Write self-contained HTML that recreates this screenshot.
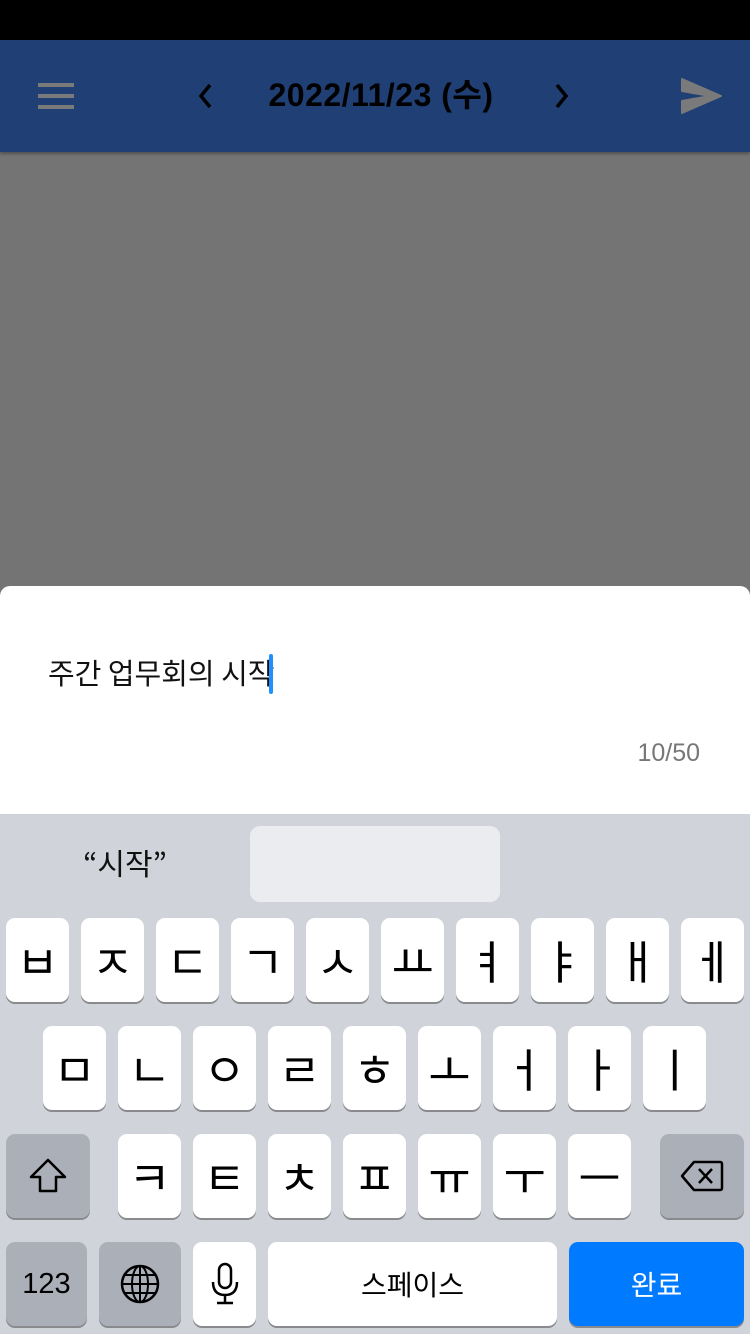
<!DOCTYPE html>
<html><head><meta charset="utf-8"><style>
*{margin:0;padding:0;box-sizing:border-box}
body{width:750px;height:1334px;position:relative;overflow:hidden;background:#747474;font-family:"Liberation Sans","Noto Sans CJK KR",sans-serif}
.a{position:absolute}
.k{position:absolute;width:63px;height:84px;background:#fff;border-radius:9px;box-shadow:0 2px 0 #898a8d;display:flex;align-items:center;justify-content:center;font-size:46px;color:#000;font-family:"Noto Sans CJK KR",sans-serif}
.g{background:#abafb8}
</style></head><body>
<div class="a" style="left:0;top:0;width:750px;height:40px;background:#000"></div>
<div class="a" style="left:0;top:40px;width:750px;height:112px;background:#203f75;box-shadow:0 2px 3px rgba(0,0,0,.3)"></div>
<div class="a" style="left:38px;top:83px;width:36px;height:4px;background:#7a7a7a"></div>
<div class="a" style="left:38px;top:94px;width:36px;height:4px;background:#7a7a7a"></div>
<div class="a" style="left:38px;top:105px;width:36px;height:4px;background:#7a7a7a"></div>
<svg class="a" style="left:190px;top:80px" width="30" height="34"><path d="M20 5 L11 16 L20 27" stroke="#000" stroke-width="3.5" fill="none"/></svg>
<svg class="a" style="left:548px;top:80px" width="30" height="34"><path d="M9 5 L18 16 L9 27" stroke="#000" stroke-width="3.5" fill="none"/></svg>
<div class="a" style="left:220px;top:73px;width:322px;text-align:center;font-size:32px;font-weight:bold;color:#000;line-height:44px;letter-spacing:0.5px">2022/11/23 (수)</div>
<svg class="a" style="left:680px;top:76px" width="44" height="40"><path d="M2 3 L41 20 L2 37 L2 25 L30 20 L2 15 Z" fill="#7a7a7a" stroke="#7a7a7a" stroke-width="2" stroke-linejoin="round"/></svg>

<div class="a" style="left:0;top:586px;width:750px;height:240px;background:#fff;border-radius:10px"></div>
<div class="a" style="left:48px;top:650px;font-size:29px;color:#111;line-height:44px;font-family:'Noto Sans CJK KR',sans-serif">주간 업무회의 시작</div>
<div class="a" style="left:269px;top:654px;width:4px;height:40px;background:#1e90ff;border-radius:2px"></div>
<div class="a" style="left:600px;top:736px;width:100px;text-align:right;font-size:25px;color:#777;line-height:34px">10/50</div>

<div class="a" style="left:0;top:814px;width:750px;height:520px;background:#d0d3d9"></div>
<div class="a" style="left:60px;top:840px;width:130px;text-align:center;font-size:30px;color:#111;line-height:44px;font-family:'Noto Sans CJK KR',sans-serif">“시작”</div>
<div class="a" style="left:250px;top:826px;width:250px;height:76px;background:#ebecef;border-radius:10px"></div>

<div class="k" style="left:6px;top:918px">ㅂ</div>
<div class="k" style="left:81px;top:918px">ㅈ</div>
<div class="k" style="left:156px;top:918px">ㄷ</div>
<div class="k" style="left:231px;top:918px">ㄱ</div>
<div class="k" style="left:306px;top:918px">ㅅ</div>
<div class="k" style="left:381px;top:918px">ㅛ</div>
<div class="k" style="left:456px;top:918px">ㅕ</div>
<div class="k" style="left:531px;top:918px">ㅑ</div>
<div class="k" style="left:606px;top:918px">ㅐ</div>
<div class="k" style="left:681px;top:918px">ㅔ</div>

<div class="k" style="left:43px;top:1026px">ㅁ</div>
<div class="k" style="left:118px;top:1026px">ㄴ</div>
<div class="k" style="left:193px;top:1026px">ㅇ</div>
<div class="k" style="left:268px;top:1026px">ㄹ</div>
<div class="k" style="left:343px;top:1026px">ㅎ</div>
<div class="k" style="left:418px;top:1026px">ㅗ</div>
<div class="k" style="left:493px;top:1026px">ㅓ</div>
<div class="k" style="left:568px;top:1026px">ㅏ</div>
<div class="k" style="left:643px;top:1026px">ㅣ</div>

<div class="k g" style="left:6px;top:1134px;width:84px"><svg width="40" height="38"><path d="M20 3 L37 20 L28 20 L28 34 L12 34 L12 20 L3 20 Z" fill="none" stroke="#000" stroke-width="2.5" stroke-linejoin="round"/></svg></div>
<div class="k" style="left:118px;top:1134px">ㅋ</div>
<div class="k" style="left:193px;top:1134px">ㅌ</div>
<div class="k" style="left:268px;top:1134px">ㅊ</div>
<div class="k" style="left:343px;top:1134px">ㅍ</div>
<div class="k" style="left:418px;top:1134px">ㅠ</div>
<div class="k" style="left:493px;top:1134px">ㅜ</div>
<div class="k" style="left:568px;top:1134px">ㅡ</div>
<div class="k g" style="left:660px;top:1134px;width:84px"><svg width="44" height="34"><path d="M14 3 L40 3 Q42 3 42 5 L42 29 Q42 31 40 31 L14 31 L2 17 Z" fill="none" stroke="#000" stroke-width="2.5" stroke-linejoin="round"/><path d="M19 10 L32 24 M32 10 L19 24" stroke="#000" stroke-width="2.5"/></svg></div>

<div class="k g" style="left:6px;top:1242px;width:81px;font-size:29px;font-family:'Liberation Sans',sans-serif">123</div>
<div class="k g" style="left:99px;top:1242px;width:82px"><svg width="40" height="40"><circle cx="20" cy="20" r="18" fill="none" stroke="#000" stroke-width="2.5"/><ellipse cx="20" cy="20" rx="8" ry="18" fill="none" stroke="#000" stroke-width="2"/><path d="M20 2 V38 M2 20 H38 M5 11 H35 M5 29 H35" stroke="#000" stroke-width="2"/></svg></div>
<div class="k" style="left:193px;top:1242px"><svg width="30" height="44"><rect x="9" y="2" width="12" height="24" rx="6" fill="none" stroke="#000" stroke-width="2.5"/><path d="M3 20 Q3 33 15 33 Q27 33 27 20 M15 33 V41 M7 41 H23" fill="none" stroke="#000" stroke-width="2.5"/></svg></div>
<div class="k" style="left:268px;top:1242px;width:289px;font-size:28px">스페이스</div>
<div class="k" style="left:569px;top:1242px;width:175px;background:#007aff;color:#fff;font-size:28px">완료</div>
</body></html>
